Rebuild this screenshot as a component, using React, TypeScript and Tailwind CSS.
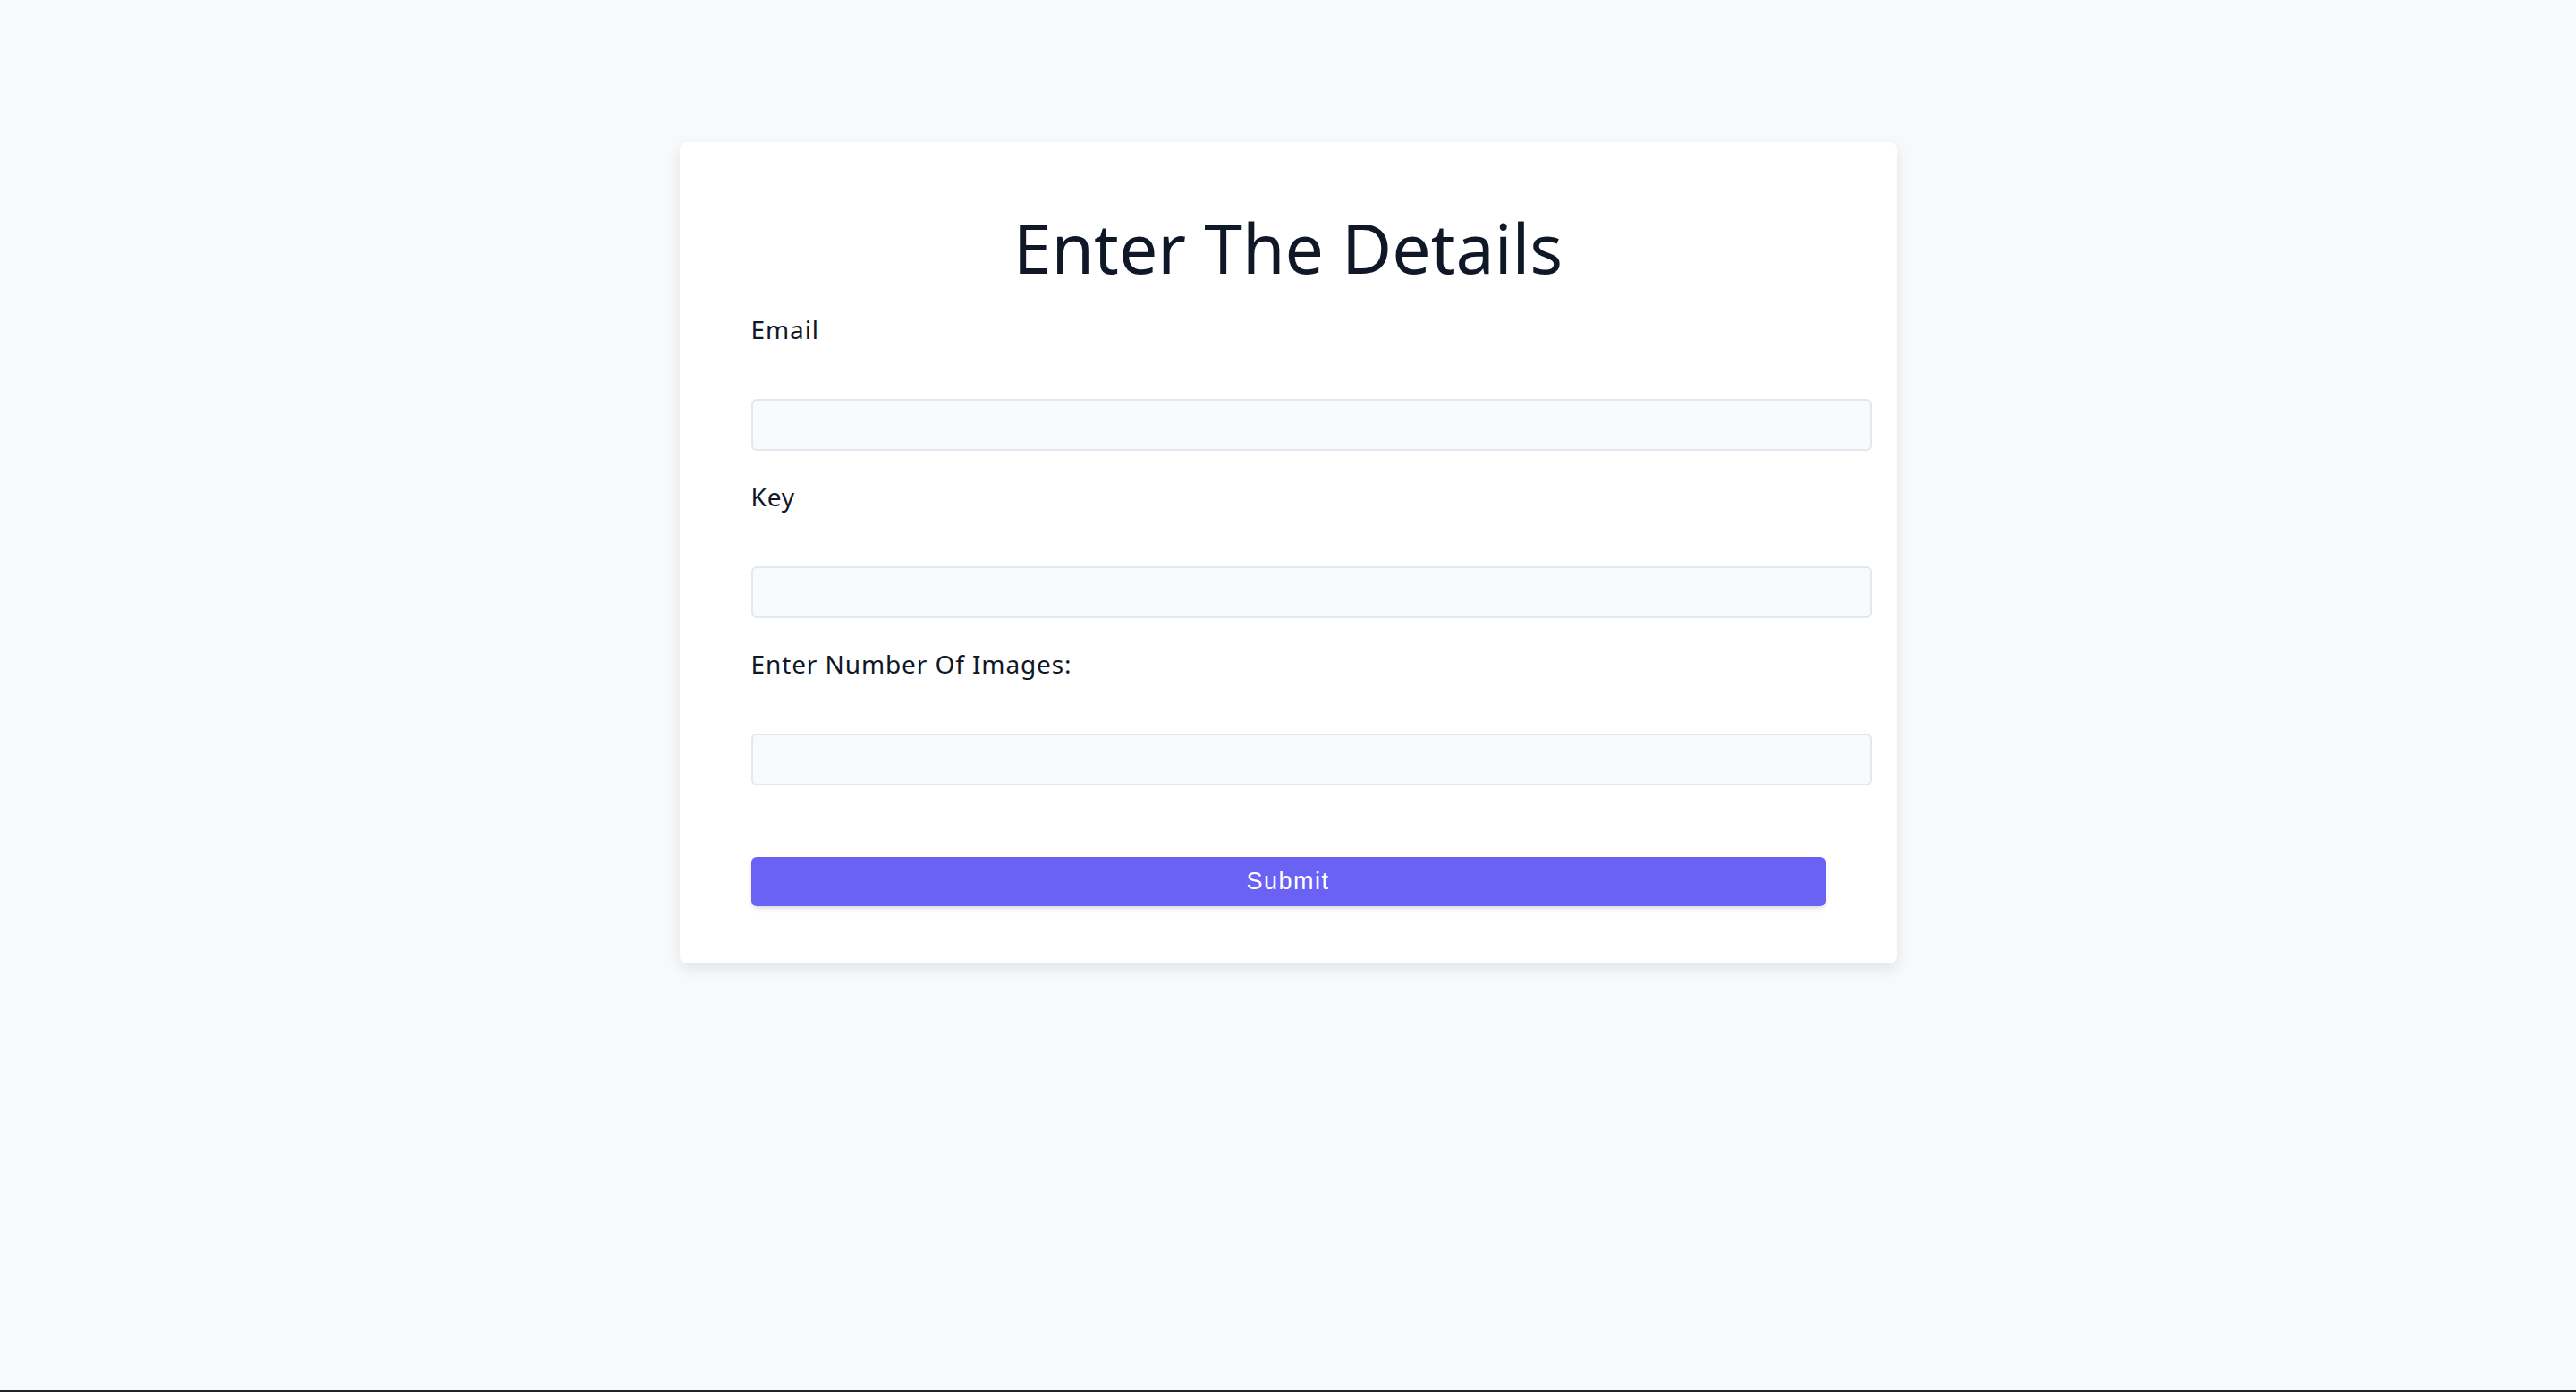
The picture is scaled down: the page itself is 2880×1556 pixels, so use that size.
import { useState } from 'react';

const fields = [
  { id: 'email', label: 'Email', type: 'email' },
  { id: 'key', label: 'Key', type: 'text' },
  { id: 'count', label: 'Enter Number Of Images:', type: 'number' },
];

export default function App() {
  const [values, setValues] = useState<Record<string, string>>({
    email: '',
    key: '',
    count: '',
  });

  return (
    <div className="h-[1556px] flex flex-col bg-[#f8f9fb] font-['Noto_Sans',sans-serif]">
      <div className="flex-1">
        {/* Form card */}
        <div className="mt-[159px] mx-auto w-[1361px] bg-white rounded-lg shadow-[0_6px_16px_rgba(0,0,0,0.09)] px-20 pt-[79px] pb-16">
          <h1 className="text-center text-[77px] leading-[77px] text-gray-900 mb-[39px]">
            Enter The Details
          </h1>

          <form onSubmit={(e) => e.preventDefault()}>
            {fields.map((f) => (
              <div key={f.id} className="mb-[37px]">
                <label
                  htmlFor={f.id}
                  className="block text-[28px] leading-[28px] tracking-[0.9px] text-gray-900 mb-16"
                >
                  {f.label}
                </label>
                <input
                  id={f.id}
                  type={f.type}
                  value={values[f.id]}
                  onChange={(e) => setValues({ ...values, [f.id]: e.target.value })}
                  className="block w-[1253px] h-[58px] px-4 bg-[#f8fafc] border-2 border-[#e2e8f0] rounded-md outline-none text-[26px]"
                />
              </div>
            ))}

            <button
              type="submit"
              className="block w-full h-[55px] mt-[80px] rounded-md bg-[#6a62f5] text-white text-[27px] tracking-[1.5px] font-['Liberation_Sans',Arial,sans-serif] shadow-md"
            >
              Submit
            </button>
          </form>
        </div>
      </div>
      <div className="h-[2px] bg-[#222222]" />
    </div>
  );
}
